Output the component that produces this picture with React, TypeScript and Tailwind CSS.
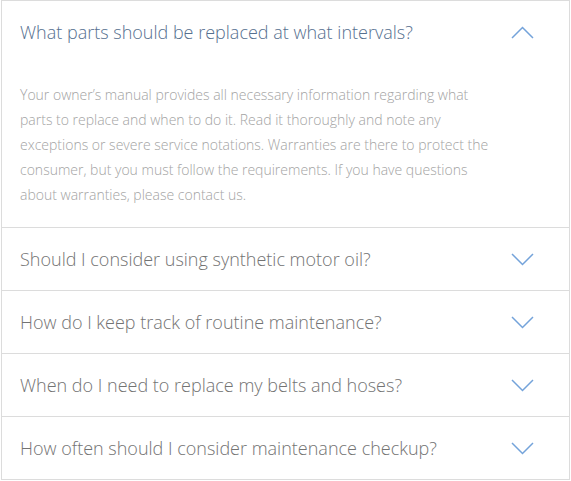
import { useState } from 'react';

const faqs = [
  {
    q: 'What parts should be replaced at what intervals?',
    a: 'Your owner’s manual provides all necessary information regarding what parts to replace and when to do it. Read it thoroughly and note any exceptions or severe service notations. Warranties are there to protect the consumer, but you must follow the requirements. If you have questions about warranties, please contact us.',
  },
  { q: 'Should I consider using synthetic motor oil?', a: '' },
  { q: 'How do I keep track of routine maintenance?', a: '' },
  { q: 'When do I need to replace my belts and hoses?', a: '' },
  { q: 'How often should I consider maintenance checkup?', a: '' },
];

const Chevron = ({ up }: { up: boolean }) => (
  <svg width="23" height="13" viewBox="0 0 23 13" fill="none" className="shrink-0">
    <path
      d={up ? 'M1 12L11.5 1.5L22 12' : 'M1 1L11.5 11.5L22 1'}
      stroke="#74a3da"
      strokeWidth="1.5"
    />
  </svg>
);

export default function App() {
  const [open, setOpen] = useState(0);

  return (
    <div className="ml-px w-[569px] border border-[#dcdcdc] bg-white font-['Open_Sans',sans-serif] font-light">
      {faqs.map((f, i) => (
        <div key={i} className={i > 0 ? 'border-t border-[#dcdcdc]' : ''}>
          <button
            onClick={() => setOpen(open === i ? -1 : i)}
            className="flex w-full items-center justify-between py-5 pl-[18px] pr-[35px] text-left"
          >
            <span
              className={`text-[18px] leading-[22px] ${
                open === i ? 'text-[#56708f]' : 'text-[#737373]'
              }`}
            >
              {f.q}
            </span>
            <Chevron up={open === i} />
          </button>
          {open === i && (
            <p className="pb-5 pl-[18px] pr-[68px] pt-[19px] text-[14px] leading-[25px] text-[#a3a3a3]">
              {f.a}
            </p>
          )}
        </div>
      ))}
    </div>
  );
}
